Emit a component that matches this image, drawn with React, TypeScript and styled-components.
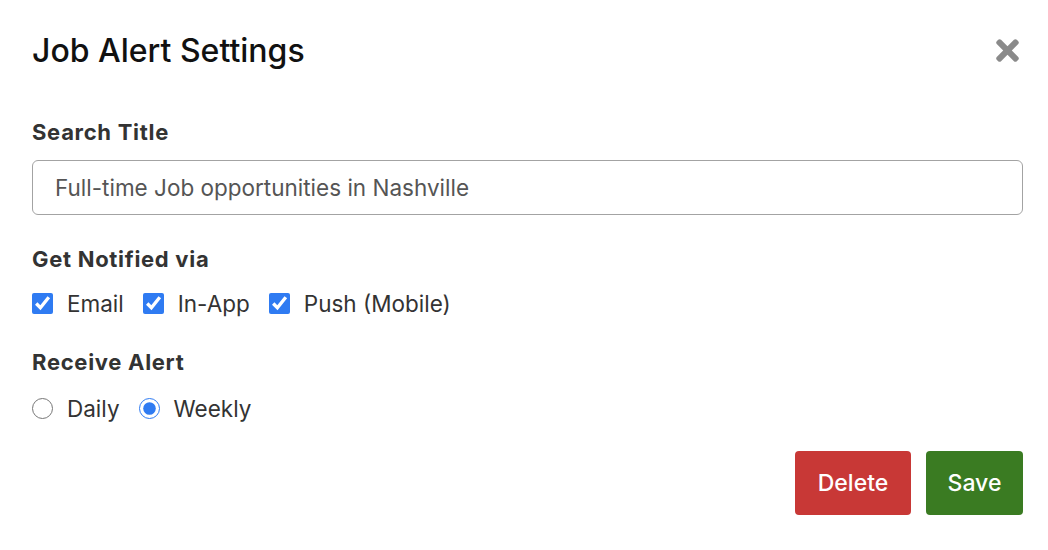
import React from 'react';
import styled, { createGlobalStyle } from 'styled-components';
import { FaTimes } from 'react-icons/fa';

const GlobalStyle = createGlobalStyle`
  html, body {
    margin: 0;
    padding: 0;
    background: #ffffff;
    font-family: Inter, "Noto Sans", "Liberation Sans", sans-serif;
  }
`;

const Dialog = styled.div`
  width: 1048px;
  height: 550px;
  box-sizing: border-box;
  padding: 28px 24px 0 32px;
  background: #fff;
`;

const Header = styled.div`
  display: flex;
  align-items: center;
  justify-content: space-between;
  height: 44px;
`;

const Title = styled.h2`
  margin: 0;
  font-size: 32px;
  font-weight: 500;
  color: #111;
`;

const CloseButton = styled.button`
  border: none;
  background: none;
  padding: 0;
  color: #8a8a8a;
  display: flex;
  align-items: center;
  cursor: pointer;
`;

const Section = styled.div<{ $top: number }>`
  margin-top: ${p => p.$top}px;
`;

const Label = styled.div`
  font-size: 22px;
  font-weight: 700;
  letter-spacing: 0.7px;
  color: #333;
  line-height: 26px;
`;

const TextInput = styled.input`
  display: block;
  box-sizing: border-box;
  width: 991px;
  height: 55px;
  margin-top: 15px;
  padding: 0 22px;
  border: 1px solid #a3a3a3;
  border-radius: 6px;
  font-family: inherit;
  font-size: 22.5px;
  color: #555;
  outline: none;
`;

const OptionRow = styled.div<{ $top: number }>`
  display: flex;
  align-items: center;
  gap: 19px;
  margin-top: ${p => p.$top}px;
  height: 26px;
`;

const Option = styled.label`
  display: flex;
  align-items: center;
  gap: 14px;
  font-size: 22.5px;
  color: #333;
  cursor: pointer;
`;

const Check = styled.input`
  width: 21px;
  height: 21px;
  margin: 0;
  accent-color: #2f7bf2;
`;

const Actions = styled.div`
  display: flex;
  justify-content: flex-end;
  gap: 15px;
  margin-top: 30px;
  width: 991px;
`;

const Button = styled.button<{ $bg: string; $w: number }>`
  width: ${p => p.$w}px;
  height: 64px;
  border: none;
  border-radius: 4px;
  background: ${p => p.$bg};
  color: #fff;
  font-family: inherit;
  font-size: 23px;
  font-weight: 500;
  cursor: pointer;
`;

export default function App() {
  return (
    <>
      <GlobalStyle />
      <Dialog>
        <Header>
          <Title>Job Alert Settings</Title>
          <CloseButton aria-label="Close">
            <FaTimes size={33} />
          </CloseButton>
        </Header>

        <Section $top={47}>
          <Label>Search Title</Label>
          <TextInput defaultValue="Full-time Job opportunities in Nashville" />
        </Section>

        <Section $top={31}>
          <Label>Get Notified via</Label>
          <OptionRow $top={18}>
            <Option><Check type="checkbox" defaultChecked />Email</Option>
            <Option><Check type="checkbox" defaultChecked />In-App</Option>
            <Option><Check type="checkbox" defaultChecked />Push (Mobile)</Option>
          </OptionRow>
        </Section>

        <Section $top={33}>
          <Label>Receive Alert</Label>
          <OptionRow $top={20}>
            <Option><Check type="radio" name="freq" />Daily</Option>
            <Option><Check type="radio" name="freq" defaultChecked />Weekly</Option>
          </OptionRow>
        </Section>

        <Actions>
          <Button $bg="#c83836" $w={116}>Delete</Button>
          <Button $bg="#3a7b22" $w={97}>Save</Button>
        </Actions>
      </Dialog>
    </>
  );
}
